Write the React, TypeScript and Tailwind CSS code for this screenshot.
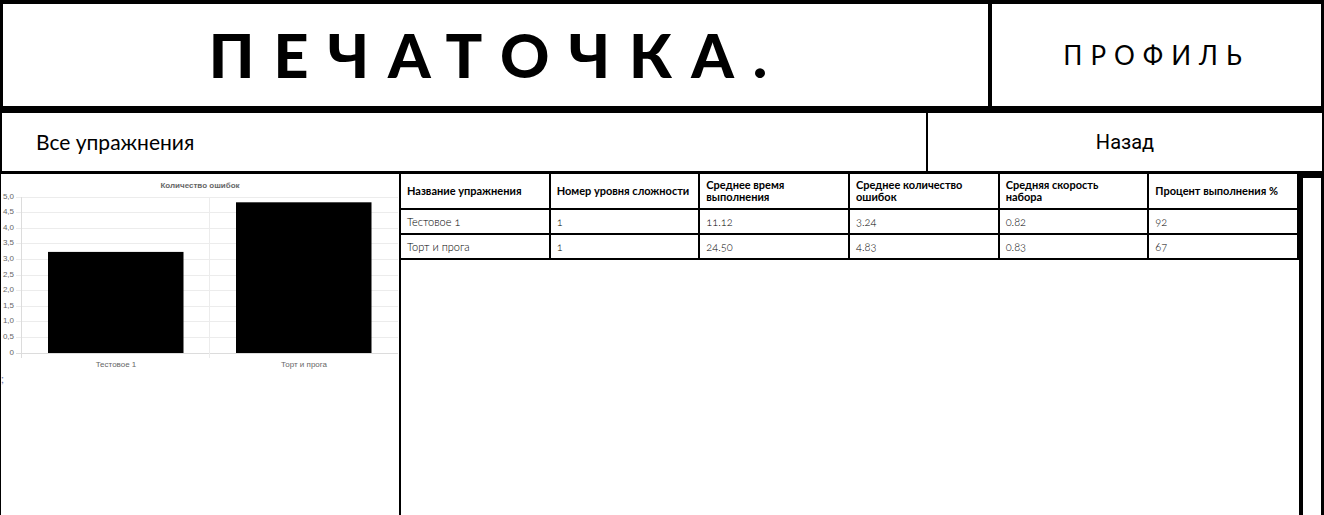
const columns = [
  'Название упражнения',
  'Номер уровня сложности',
  'Среднее время\nвыполнения',
  'Среднее количество\nошибок',
  'Средняя скорость\nнабора',
  'Процент выполнения %',
];

const rows = [
  ['Тестовое 1', '1', '11.12', '3.24', '0.82', '92'],
  ['Торт и прога', '1', '24.50', '4.83', '0.83', '67'],
];

const ticks = ['5,0', '4,5', '4,0', '3,5', '3,0', '2,5', '2,0', '1,5', '1,0', '0,5', '0'];

const bars = [
  { label: 'Тестовое 1', value: 3.24, x: 47 },
  { label: 'Торт и прога', value: 4.83, x: 235 },
];

const TOP = 23;
const BOTTOM = 179;
const STEP = (BOTTOM - TOP) / 10;

function ErrorsChart() {
  return (
    <svg
      viewBox="0 0 398 199"
      role="img"
      aria-label="Количество ошибок"
      className="block w-full font-['Liberation_Sans',sans-serif]"
    >
      <text x="199" y="14" textAnchor="middle" fontSize="8" fontWeight="700" fill="#666">
        Количество ошибок
      </text>
      {ticks.map((tick, i) => {
        const y = Math.floor(TOP + i * STEP);
        return (
          <g key={tick}>
            <line x1="15" x2="397" y1={y + 0.5} y2={y + 0.5} stroke={i === 10 ? '#dcdcdc' : '#ececec'} />
            <text x="13" y={y + 2} textAnchor="end" fontSize="8" fill="#666">
              {tick}
            </text>
          </g>
        );
      })}
      <line x1="20.5" x2="20.5" y1="23" y2="184" stroke="#dcdcdc" />
      <line x1="208.5" x2="208.5" y1="23" y2="184" stroke="#ececec" />
      {bars.map((bar) => {
        const height = (bar.value / 5) * (BOTTOM - TOP);
        return (
          <g key={bar.label}>
            <rect x={bar.x} y={BOTTOM - height} width="135.5" height={height} fill="#000" />
            <text x={bar.x + 68} y="193" textAnchor="middle" fontSize="8" fill="#666">
              {bar.label}
            </text>
          </g>
        );
      })}
    </svg>
  );
}

export default function App() {
  return (
    <div className="flex min-h-screen flex-col bg-white font-[Lato,sans-serif] text-black">
      <header className="grid grid-cols-[985fr_333fr] border-x-3 border-t-4 border-b-7 border-black">
        <h1 className="flex h-[102px] items-center justify-center pl-1 text-[61px] font-black tracking-[19px]">
          ПЕЧАТОЧКА.
        </h1>
        <a
          href="#profile"
          className="flex items-center justify-center border-l-4 border-black text-[26px] tracking-[8px]"
        >
          ПРОФИЛЬ
        </a>
      </header>

      <nav className="grid grid-cols-[7fr_3fr] border-x-2 border-b-3 border-black">
        <a href="#exercises" className="flex h-[58px] items-center pl-[34px] text-[21px]">
          Все упражнения
        </a>
        <a
          href="#back"
          className="flex items-center justify-center border-l-2 border-black font-[Roboto,sans-serif] text-[20px]"
        >
          Назад
        </a>
      </nav>

      <main className="grid flex-1 grid-cols-[minmax(0,399fr)_minmax(0,900fr)_minmax(0,25fr)]">
        <section className="border-l border-black">
          <ErrorsChart />
          <p className="text-[11px] leading-3 text-[#6b78b0]">;</p>
        </section>
        <section className="border-l-2 border-black">
          <table className="w-full table-fixed border-separate border-spacing-0 text-left text-[11px] leading-3 [font-variant-numeric:oldstyle-nums]">
            <thead>
              <tr className="h-9">
                {columns.map((column) => (
                  <th key={column} className="border-r-2 border-b-2 border-black px-1.5 py-0 font-bold whitespace-pre-line">
                    {column}
                  </th>
                ))}
              </tr>
            </thead>
            <tbody>
              {rows.map((row) => (
                <tr key={row[0]} className="h-[25px]">
                  {row.map((cell, i) => (
                    <td key={i} className="border-r-2 border-b-2 border-black px-1.5 py-0 font-light text-black">
                      {cell}
                    </td>
                  ))}
                </tr>
              ))}
            </tbody>
          </table>
        </section>
        <aside className="border-t-4 border-r-3 border-l-4 border-black" />
      </main>
    </div>
  );
}
